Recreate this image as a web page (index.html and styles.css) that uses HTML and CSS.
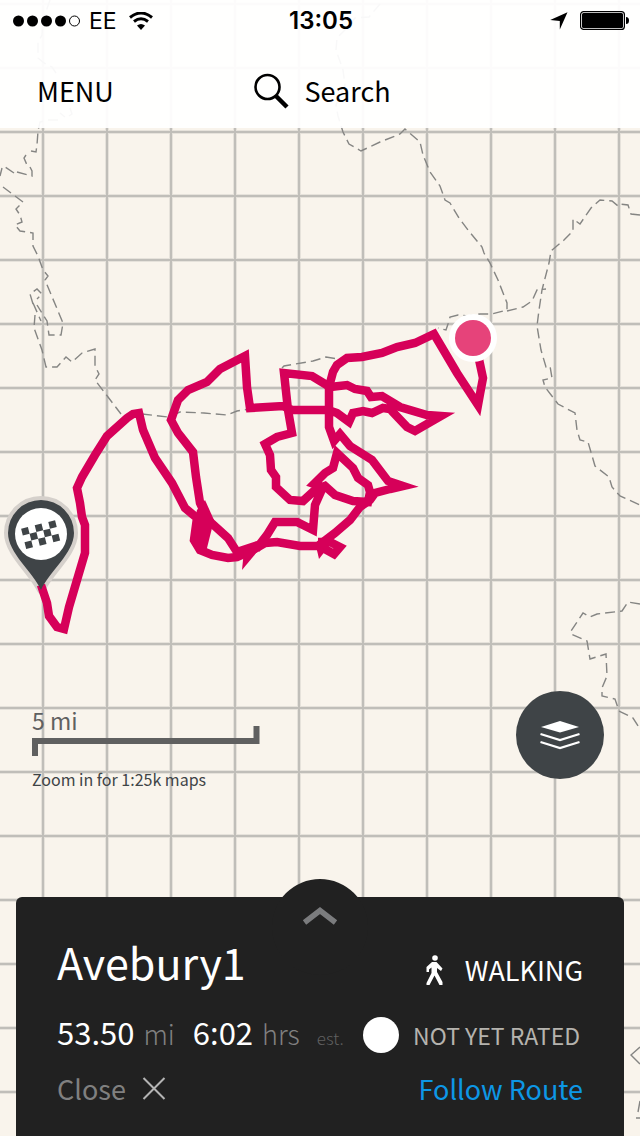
FILE: index.html
```html
<!DOCTYPE html>
<html lang="en">
<head>
<meta charset="utf-8">
<meta name="viewport" content="width=device-width, initial-scale=1">
<title>Avebury1</title>
<link rel="stylesheet" href="styles.css">
</head>
<body>
<div class="screen">
  <svg class="map" viewBox="0 0 640 1136" preserveAspectRatio="xMidYMid slice" aria-hidden="true">
    <defs>
      <pattern id="grid" x="11" y="36" width="64" height="64" patternUnits="userSpaceOnUse">
        <path class="grid-soft" d="M32 0V64M0 32H64"/>
        <path class="grid-line" d="M32 0V64M0 32H64"/>
      </pattern>
    </defs>
    <rect width="640" height="1136" fill="url(#grid)"/>
    <g class="boundary">
      <path d="M50 0L43 20L42 35L38 42V58L44 63L52 67L56 73M70 108L72 114L66 118L60 113M58 120H48L40 122L38 131L37 145L36 152L31 151M26 155L24 158L27 165M30 167L32 171V176L17 172M14 173L5 167M2 168L0 176M3 187L23 202L16 209L20 215L22 222L15 225L20 231L33 233V246L38 256L43 270L48 276L45 280L63 323L61 335L49 335L47 321L37 305M33 304L30 294L37 289L42 294L37 299M33 303L41 321M35 315L34 328L42 350L46 367L57 367L66 357L72 362L82 353L95 349V366L99 374L95 380L121 414"/>
      <path d="M142 414L168 417L180 412L204 413L227 415L237 411L250 409M282 368L284 366L313 361L326 357L338 359"/>
      <path d="M380 4L369 17L355 18L347 28L337 38L336 50L343 70L345 85L336 105L338 116L343 132L349 144L361 151L380 142L400 134L405 129L420 142L423 155L430 172L440 186L445 200L450 203L459 218L468 230L482 247L484 253L490 263L498 280L507 303V310L492 314H480L468 316L458 315L450 317L448 324L446 330L438 328"/>
      <path d="M507 311L523 307L532 301L537 290L546 289M640 215L631 214L628 205L620 204L618 206L612 201L600 200L591 208L580 224L573 219V231L564 240L551 251L549 263L542 290L539 310L537 326L541 350L546 367L550 366L552 378L543 380L545 387L558 404L575 413L577 430L580 440L588 442L595 466L609 477L612 487L620 496L640 505"/>
      <path d="M640 604L628 602L622 611L597 614L590 617L583 613L571 631V634L587 641L590 659L606 654L607 676L602 688V696L615 699L619 711L633 718L640 729"/>
      <path class="contour" d="M640 1047L631 1055L640 1064M640 1101L638 1112M636 1118H640"/>
    </g>
    <path class="pin-halo" d="M41 590C33 572 8 553 8 533A33 33 0 0 1 74 533C74 553 49 572 41 590Z"/>
    <g class="route">
      <path d="M41 585L47 603L49 616L57 627L64 629L69 607L77 580L85 553V525L82 517L80 503L77 488L82 477L95 455L107 436L127 418L133 414L139 413L143 430L155 458L172 483L185 508L197 518L194 540L200 550L212 555L228 558L237 557L253 550L265 543L277 542L300 546H318L335 533L350 520L360 507L370 500L375 493L390 489L403 486L388 481L372 460L350 446L340 434L334 441L329 427V387L333 372L337 365L347 358L362 357L382 353L397 347L415 343L434 334L457 373L478 405L480 394L483 378L477 350"/>
      <path d="M258 545L237 552L228 538L208 520L200 503L196 477L193 452L178 433L171 420L178 400L188 390L207 382L220 369L245 356L247 387L250 408L283 406L292 410L328 410L337 413L349 422L353 413L363 411L372 413L383 408L390 409L407 427L415 431L441 416L427 415L400 407L382 396L371 397L367 391L355 389L347 385L330 387L312 376L284 373L288 410L292 433L277 437L265 444L270 455L271 470L276 477V487L290 500L303 501L315 490L325 486L335 495L353 501L368 502L370 492L368 485L358 478L353 468L337 453L333 468L325 473L314 484L323 487L315 505L313 530L297 522H275L267 535L256 549"/>
      <path class="route-fill" d="M197 510L205 500L214 520L206 552H198L190 541Z"/>
      <path class="route-fill" d="M244 550L242 570L262 546Z"/>
      <path d="M319 544L323 548L334 554L340 547L330 542H318"/>
      <path class="route-fill" d="M316 546L319 559L326 550Z"/>
    </g>
    <circle cx="473" cy="338" r="24" fill="#fff"/>
    <circle cx="473" cy="338" r="18" fill="#e6437a"/>
    <path class="pin" d="M41 590C33 572 8 553 8 533A33 33 0 0 1 74 533C74 553 49 572 41 590Z"/>
    <circle cx="41" cy="534" r="26" fill="#fff"/>
    <g class="checks" transform="translate(41 534) rotate(-14)">
      <path d="M-18-10h7v7h-7zM-4-10h7v7h-7zM10-10h7v7h-7zM-11-3h7v7h-7zM3-3h7v7h-7zM-18 4h7v7h-7zM-4 4h7v7h-7zM10 4h7v7h-7z"/>
    </g>
  </svg>

  <header class="topbar">
    <div class="status">
      <div class="status-left">
        <svg width="68" height="12" viewBox="0 0 68 12" role="img" aria-label="Signal, 4 of 5"><circle cx="5.5" cy="6" r="5.5"/><circle cx="19.5" cy="6" r="5.5"/><circle cx="33.5" cy="6" r="5.5"/><circle cx="47.5" cy="6" r="5.5"/><circle cx="61.5" cy="6" r="5" fill="none" stroke="#000"/></svg>
        <span class="carrier">EE</span>
        <svg width="24" height="18" viewBox="0 0 24 18" role="img" aria-label="Wi-Fi"><path d="M1 5.5Q12-3.5 23 5.5" fill="none" stroke="#000" stroke-width="3"/><path d="M5 9.5Q12 4 19 9.5" fill="none" stroke="#000" stroke-width="3"/><path d="M8 13.500Q12 10.500 16 13.500L12 18Z"/></svg>
      </div>
      <time class="clock">13:05</time>
      <div class="status-right">
        <svg width="18" height="18" viewBox="0 0 18 18" role="img" aria-label="Location on"><path d="M17.500.3L9.800 17.500V9L.2 8Z"/></svg>
        <svg width="49" height="19" viewBox="0 0 49 19" role="img" aria-label="Battery full"><rect x=".6" y=".6" width="43.800" height="17.800" rx="3" fill="#fff" stroke="#000" stroke-width="1.200"/><rect x="2" y="2" width="41" height="15" rx="1.500"/><path d="M46 6q3 0 3 3.500T46 13Z"/></svg>
      </div>
    </div>
    <nav class="nav">
      <button class="nav-button" type="button">MENU</button>
      <button class="nav-button search" type="button">
        <svg width="36" height="36" viewBox="0 0 36 36" aria-hidden="true"><circle cx="13.500" cy="14" r="12" fill="none" stroke="#000" stroke-width="2.600"/><path d="M21.500 22.500L33 34" stroke="#000" stroke-width="4.500"/></svg>
        Search
      </button>
    </nav>
  </header>

  <main class="tools">
    <div class="scale">
      <div class="scale-label">5 mi</div>
      <svg class="scale-bar" width="228" height="30" viewBox="0 0 228 30" aria-hidden="true"><path d="M3 30V15H224.500V0" fill="none" stroke="#606060" stroke-width="6"/></svg>
      <p class="scale-note">Zoom in for 1:25k maps</p>
    </div>
    <button class="layers" type="button" aria-label="Map layers">
      <svg width="42" height="30" viewBox="0 0 42 30" aria-hidden="true"><path d="M2 7L21 1L40 7L21 12.500Z" fill="#fff"/><path d="M1.500 14L21 20L40.500 14M1.500 22L21 28L40.500 22" fill="none" stroke="#fff" stroke-width="2.200"/></svg>
    </button>
  </main>

  <section class="panel">
    <button class="handle" type="button" aria-label="Expand route details">
      <svg width="36" height="18" viewBox="0 0 36 18" aria-hidden="true"><path d="M2.500 15.500L18 3.500L33.500 15.500" fill="none" stroke="#7b7c7e" stroke-width="5.500"/></svg>
    </button>
    <div class="row row-title">
      <h1 class="title">Avebury1</h1>
      <div class="mode">
        <svg width="17" height="30" viewBox="0 0 17 30" aria-hidden="true"><circle cx="9" cy="3" r="2.800" fill="#fff"/><path d="M6 7H10.500L16.500 13.500L15 16L11 13V17L16.500 27V30H13.500L8.500 20.500L3.500 30H.500V28L5.500 18V12.500L3 14.500V17H.500V12Z" fill="#fff"/></svg>
        <span>WALKING</span>
      </div>
    </div>
    <div class="row row-stats">
      <div class="stats">
        <span class="value">53.50</span><span class="unit">mi</span>
        <span class="value value-next">6:02</span><span class="unit">hrs</span><span class="est">est.</span>
      </div>
      <div class="rating"><span class="rating-dot"></span>NOT YET RATED</div>
    </div>
    <div class="row row-actions">
      <button class="close" type="button">Close
        <svg width="24" height="24" viewBox="0 0 24 24" aria-hidden="true"><path d="M1.500 1L22.500 22M22.500 1L1.500 22" stroke="#b4b4b4" stroke-width="2"/></svg>
      </button>
      <a class="follow" href="#follow">Follow Route</a>
    </div>
  </section>
</div>
</body>
</html>
```
FILE: styles.css
```css
* {
  box-sizing: border-box;
}

body {
  margin: 0;
  font-family: "Noto Sans CJK SC", "Noto Sans", sans-serif;
  color: #000;
}

button {
  border: 0;
  padding: 0;
  background: none;
  color: inherit;
  font: inherit;
  cursor: pointer;
}

svg {
  display: block;
  flex: none;
}

.screen {
  position: relative;
  display: flex;
  flex-direction: column;
  min-height: 100vh;
  overflow: hidden;
  background: #f9f4ec;
}

/* Map */
.map {
  position: absolute;
  inset: 0;
  width: 100%;
  height: 100%;
}

.grid-soft {
  stroke: #e6e2db;
  stroke-width: 4;
}

.grid-line {
  stroke: #c0beb9;
  stroke-width: 2;
}

.boundary {
  fill: none;
  stroke: #858583;
  stroke-width: 1.4;
  stroke-dasharray: 10 5;
}

.contour {
  stroke-dasharray: none;
}

.route {
  fill: none;
  stroke: #d60059;
  stroke-width: 8.5;
  stroke-miterlimit: 4;
}

.route-fill {
  fill: #d60059;
  stroke: none;
}

.pin {
  fill: #3f4447;
}

.pin-halo {
  fill: #d5d0cb;
  stroke: #d5d0cb;
  stroke-width: 8;
  stroke-linejoin: round;
}

.checks {
  fill: #3f4447;
}

/* Top bar */
.topbar {
  position: relative;
  background: #fffffff0;
}

.status {
  display: grid;
  grid-template-columns: 1fr auto 1fr;
  align-items: center;
  height: 41px;
  padding: 0 11px 0 13px;
  font-family: Inter, "Liberation Sans", sans-serif;
  font-size: 24px;
  line-height: 40px;
}

.status-left,
.status-right {
  display: flex;
  align-items: center;
  gap: 12px;
}

.status-left {
  gap: 8px;
}

.carrier {
  margin-right: 4px;
  font-size: 23px;
}

.clock {
  font-weight: 600;
}

.status-right {
  justify-content: flex-end;
}

.nav {
  display: grid;
  grid-template-columns: 1fr auto 1fr;
  align-items: center;
  height: 87px;
  padding: 0 32px 0 37px;
  font-size: 27px;
  line-height: 40px;
}

.nav-button {
  justify-self: start;
  padding-top: 12px;
}

.search {
  display: flex;
  align-items: center;
  gap: 14px;
}

/* Map tools */
.tools {
  position: relative;
  display: flex;
  flex: 1;
  align-items: flex-end;
  justify-content: space-between;
  padding: 0 36px 106px 32px;
}

.scale-label {
  color: #606060;
  font-size: 23px;
  line-height: 32px;
}

.scale-bar {
  margin-top: -10px;
}

.scale-note {
  margin: 11px 0 0;
  color: #3f4447;
  font-size: 16px;
  line-height: 24px;
}

.layers {
  display: flex;
  align-items: center;
  justify-content: center;
  width: 88px;
  height: 88px;
  margin-bottom: 12px;
  border-radius: 50%;
  background: #3f4447;
}

/* Route panel */
.panel {
  position: relative;
  margin: 0 16px;
  padding: 32px 41px 27px;
  border-radius: 6px 6px 0 0;
  background: #212121;
  color: #fff;
}

.handle {
  position: absolute;
  top: -18px;
  left: 50%;
  display: flex;
  justify-content: center;
  width: 96px;
  height: 96px;
  margin-left: -48px;
  padding-top: 28px;
  border-radius: 50%;
  background: #212121;
}

.row {
  position: relative;
  display: flex;
  align-items: center;
  justify-content: space-between;
}

.row-title {
  height: 72px;
}

.title {
  margin: 0;
  padding-bottom: 8px;
  font-size: 43px;
  font-weight: 400;
  line-height: 64px;
}

.mode {
  display: flex;
  align-items: center;
  gap: 22px;
  padding-top: 9px;
  font-size: 27px;
  line-height: 40px;
}

.row-stats {
  height: 68px;
}

.stats {
  display: flex;
  align-items: baseline;
  font-size: 31px;
  line-height: 40px;
}

.value-next {
  margin-left: 18px;
}

.unit {
  margin-left: 9px;
  color: #808080;
  font-size: 27px;
  font-weight: 300;
}

.est {
  margin-left: 17px;
  color: #606060;
  font-size: 17px;
  font-weight: 300;
}

.rating {
  display: flex;
  align-items: center;
  gap: 14px;
  padding-right: 3px;
  color: #b5b3ae;
  font-size: 23px;
  line-height: 40px;
}

.rating-dot {
  width: 36px;
  height: 36px;
  border-radius: 50%;
  background: #fff;
}

.row-actions {
  height: 40px;
  font-size: 27px;
  line-height: 40px;
}

.close {
  display: flex;
  align-items: center;
  gap: 16px;
  color: #808080;
}

.follow {
  color: #0d97e6;
  text-decoration: none;
}
```
